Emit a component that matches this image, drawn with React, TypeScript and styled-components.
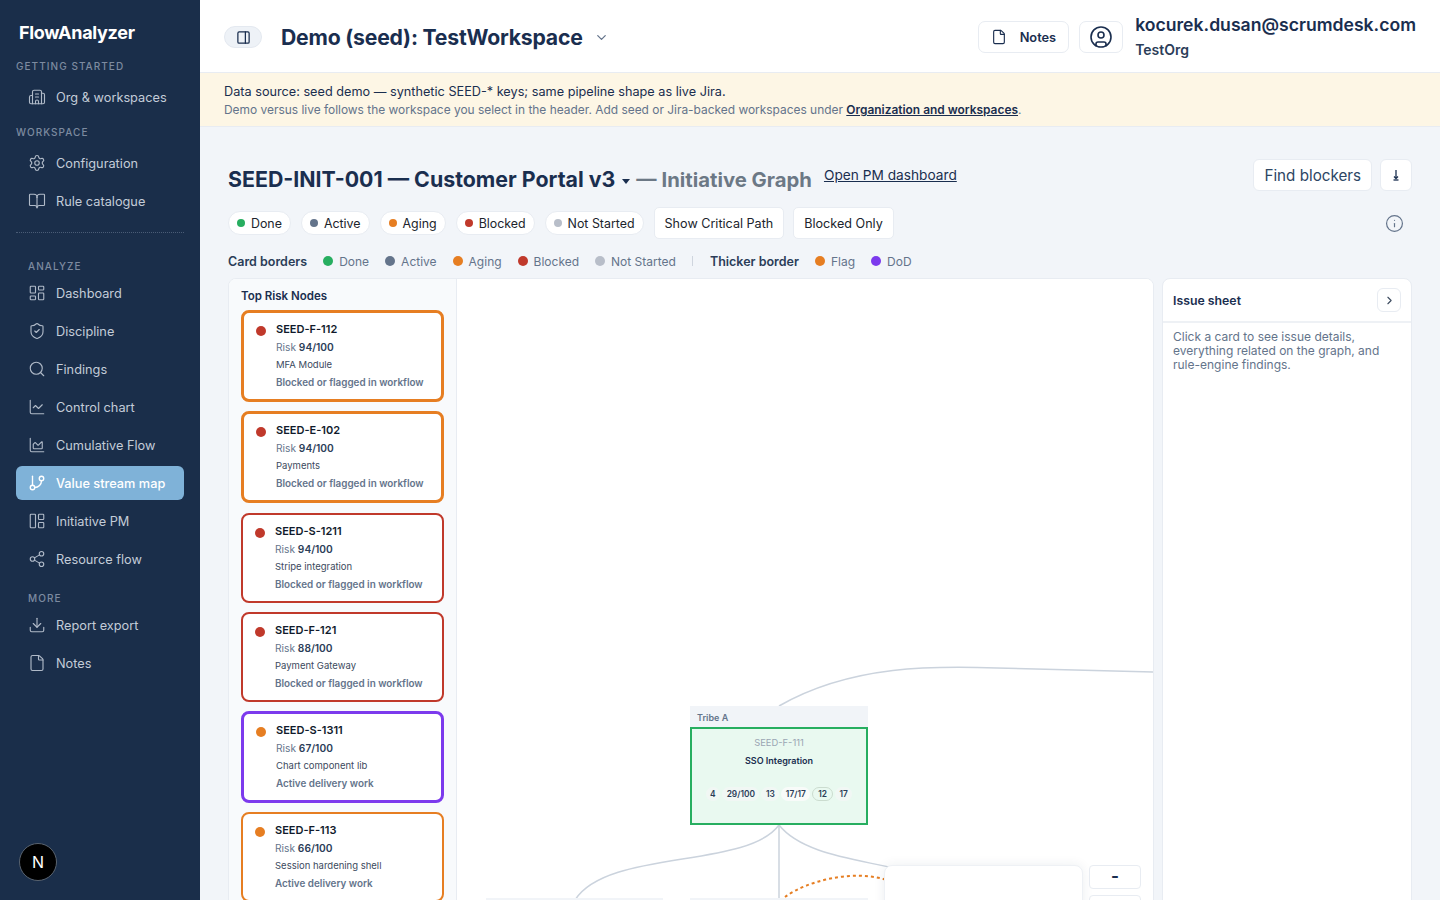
import React from 'react';
import styled, { createGlobalStyle } from 'styled-components';
import {
  BookOpen,
  Building2,
  ChartArea,
  ChartLine,
  ChevronDown,
  ChevronRight,
  CircleUser,
  Download,
  File,
  GitBranch,
  Info,
  LayoutPanelLeft,
  PanelRight,
  Search,
  Settings,
  Share2,
  ShieldCheck,
  LayoutDashboard,
} from 'lucide-react';

const colors = {
  done: '#27ae60',
  active: '#64748b',
  aging: '#e67e22',
  blocked: '#c0392b',
  idle: '#b8bec9',
  dod: '#7c3aed',
  ink: '#1a2e4f',
};

const GlobalStyle = createGlobalStyle`
  html, body {
    margin: 0;
    height: 100%;
    overflow: hidden;
    font-family: Inter, "Liberation Sans", sans-serif;
    color: ${colors.ink};
    background: #f2f5f9;
  }
  * { box-sizing: border-box; }
`;

const Shell = styled.div`
  display: flex;
  width: 1440px;
  height: 900px;
  overflow: hidden;
`;

const Sidebar = styled.aside`
  position: relative;
  flex: 0 0 200px;
  padding: 21px 16px 0;
  background: #1a2e4a;
`;

const Logo = styled.div`
  height: 24px;
  margin: 0 0 14px 3px;
  font-size: 18px;
  line-height: 24px;
  font-weight: 700;
  letter-spacing: -0.3px;
  color: #fff;
`;

const SectionLabel = styled.div<{ $indent?: boolean; $gap: number; $top?: number }>`
  height: 14px;
  margin: ${p => p.$top ?? 15}px 0 ${p => p.$gap}px ${p => (p.$indent ? 12 : 0)}px;
  font-size: 10px;
  line-height: 14px;
  font-weight: 500;
  letter-spacing: 1.05px;
  text-transform: uppercase;
  color: #7d8ba0;
`;

const NavItem = styled.a<{ $active?: boolean }>`
  display: flex;
  align-items: center;
  gap: 10px;
  height: 34px;
  margin-bottom: 4px;
  padding-left: 12px;
  border-radius: 6px;
  font-size: 12.75px;
  font-weight: ${p => (p.$active ? 500 : 400)};
  color: ${p => (p.$active ? '#fff' : '#c3ccd8')};
  background: ${p => (p.$active ? '#7fb2d8' : 'transparent')};

  svg {
    flex: none;
    width: 18px;
    height: 18px;
    stroke-width: ${p => (p.$active ? 1.8 : 1.5)};
    color: ${p => (p.$active ? '#fff' : '#b0bac8')};
  }
`;

const Divider = styled.div`
  margin: 14px 0 26px;
  border-top: 1px dotted #4a5c76;
`;

const NextBadge = styled.div`
  position: absolute;
  left: 19px;
  top: 843px;
  display: flex;
  align-items: center;
  justify-content: center;
  width: 38px;
  height: 38px;
  border-radius: 50%;
  border: 1px solid #59636f;
  background: #000;
  color: #fff;
  font-size: 16px;
  font-weight: 400;
`;

const Main = styled.main`
  flex: 1;
  min-width: 0;
  display: flex;
  flex-direction: column;
`;

const Header = styled.header`
  display: flex;
  align-items: center;
  flex: 0 0 73px;
  padding: 2px 24px 0;
  background: #fff;
  border-bottom: 1px solid #e8ecf2;
`;

const SidebarToggle = styled.button`
  display: flex;
  align-items: center;
  justify-content: center;
  width: 38px;
  height: 22px;
  margin-right: 19px;
  padding: 0;
  border: 1px solid #e4e9f0;
  border-radius: 11px;
  background: #eef2f7;
  color: ${colors.ink};

  svg { width: 15px; height: 15px; }
`;

const WorkspaceName = styled.div`
  font-size: 21.2px;
  font-weight: 700;
  letter-spacing: -0.2px;
  color: ${colors.ink};
`;

const WorkspaceCaret = styled(ChevronDown)`
  width: 15px;
  height: 15px;
  margin-left: 11px;
  color: #64748b;
`;

const HeaderRight = styled.div`
  display: flex;
  align-items: center;
  margin-left: auto;
`;

const HeaderButton = styled.button`
  display: flex;
  align-items: center;
  justify-content: center;
  gap: 13px;
  height: 32px;
  padding: 0 12px;
  margin-right: 10px;
  border: 1px solid #e8ecf2;
  border-radius: 7px;
  background: #fff;
  color: ${colors.ink};
  font: 600 12.8px Inter, "Liberation Sans", sans-serif;

  svg { width: 16px; height: 16px; stroke-width: 1.7; }
`;

const UserButton = styled(HeaderButton)`
  width: 44px;
  padding: 0;
  margin-right: 12px;

  svg { width: 24px; height: 24px; stroke-width: 1.6; }
`;

const UserBlock = styled.div`
  display: flex;
  flex-direction: column;
  gap: 4px;
  margin-top: -2px;
`;

const UserEmail = styled.div`
  font-size: 17.6px;
  line-height: 24px;
  font-weight: 600;
`;

const UserOrg = styled.div`
  font-size: 14px;
  line-height: 18px;
  font-weight: 600;
  color: #2b3d58;
`;

const Banner = styled.div`
  flex: 0 0 54px;
  padding: 10px 24px 0;
  background: #fdf6e5;
  border-bottom: 1px solid #e8ecf2;
`;

const BannerLead = styled.div`
  font-size: 12.7px;
  line-height: 18px;
  color: ${colors.ink};
`;

const BannerSub = styled.div`
  font-size: 11.93px;
  line-height: 18px;
  color: #64748b;

  a {
    font-weight: 600;
    color: ${colors.ink};
    text-decoration: underline;
  }
`;

const Content = styled.div`
  flex: 1;
  min-height: 0;
  padding: 32px 28px 0;
`;

const TitleRow = styled.div`
  display: flex;
  align-items: flex-start;
  height: 48px;
`;

const PageTitle = styled.h1`
  display: flex;
  align-items: center;
  height: 32px;
  margin: 4px 0 0;
  font-size: 21.35px;
  font-weight: 700;
  white-space: nowrap;
  color: ${colors.ink};
`;

const TitleCaret = styled.span`
  width: 0;
  height: 0;
  margin: 4px 6px 0 7px;
  border-left: 4.5px solid transparent;
  border-right: 4.5px solid transparent;
  border-top: 5px solid ${colors.ink};
`;

const TitleMuted = styled.span`
  font-size: 20.3px;
  font-weight: 700;
  color: #6c7885;
`;

const PmLink = styled.a`
  margin: 6px 0 0 12px;
  font-size: 13.7px;
  line-height: 20px;
  color: ${colors.ink};
  text-decoration: underline;
`;

const TitleActions = styled.div`
  display: flex;
  gap: 8px;
  margin-left: auto;
`;

const GhostButton = styled.button`
  display: flex;
  align-items: center;
  justify-content: center;
  height: 32px;
  min-width: 32px;
  padding: 0 10px;
  border: 1px solid #e8ecf2;
  border-radius: 6px;
  background: #fff;
  color: #2d4664;
  font: 400 15.2px Inter, "Liberation Sans", sans-serif;
`;

const FilterRow = styled.div`
  display: flex;
  align-items: center;
  height: 32px;
`;

const Pill = styled.button`
  display: flex;
  align-items: center;
  gap: 6px;
  height: 24px;
  margin-right: 10px;
  padding: 0 8px;
  border: 1px solid #e8ecf2;
  border-radius: 12px;
  background: #fff;
  color: #20242c;
  font: 400 12.4px Inter, "Liberation Sans", sans-serif;
`;

const Dot = styled.i<{ $color: string; $size: number }>`
  flex: none;
  display: block;
  width: ${p => p.$size}px;
  height: ${p => p.$size}px;
  border-radius: 50%;
  background: ${p => p.$color};
`;

const ToggleButton = styled.button`
  height: 32px;
  margin-right: 9px;
  padding: 0 10px;
  border: 1px solid #e8ecf2;
  border-radius: 5px;
  background: #fff;
  color: #20242c;
  font: 400 12.6px Inter, "Liberation Sans", sans-serif;
`;

const InfoIcon = styled(Info)`
  width: 19px;
  height: 19px;
  margin: 0 8px 0 auto;
  stroke-width: 1.5;
  color: #64748b;
`;

const LegendRow = styled.div`
  display: flex;
  align-items: center;
  height: 39px;
  padding-top: 5px;
  font-size: 12px;
  color: #64748b;
`;

const LegendTitle = styled.b`
  margin-right: 16px;
  font-size: 12.5px;
  font-weight: 600;
  color: #2b3d58;
`;

const LegendItem = styled.span`
  display: flex;
  align-items: center;
  gap: 6px;
  margin-right: 16px;
`;

const LegendBar = styled.span`
  width: 1px;
  height: 10px;
  margin: 0 17px 0 0;
  background: #cfd5de;
`;

const Workbench = styled.div`
  display: flex;
  gap: 8px;
  height: 640px;
`;

const GraphPanel = styled.section`
  display: flex;
  flex: 0 0 926px;
  border: 1px solid #e8ecf2;
  border-radius: 8px;
  background: #fff;
  overflow: hidden;
`;

const RiskColumn = styled.div`
  flex: 0 0 228px;
  padding: 9px 12px 0;
  background: #f8fafc;
  border-right: 1px solid #e8ecf2;
`;

const RiskHeading = styled.div`
  height: 22px;
  font-size: 11.5px;
  line-height: 17px;
  font-weight: 600;
  color: ${colors.ink};
`;

const RiskCard = styled.div<{ $border: string; $thick?: boolean; $after: number }>`
  display: flex;
  align-items: flex-start;
  gap: 10px;
  height: ${p => (p.$thick ? 92 : 90)}px;
  margin-bottom: ${p => p.$after}px;
  padding: 8px 12px;
  border: ${p => (p.$thick ? 3 : 2)}px solid ${p => p.$border};
  border-radius: 8px;
  background: #fff;
`;

const RiskDot = styled(Dot)`
  margin-top: 5px;
`;

const RiskBody = styled.div`
  min-width: 0;
  font-size: 9.5px;
  line-height: 17.5px;
  color: #3c4a5e;
  white-space: nowrap;
`;

const RiskKey = styled.div`
  font-size: 11px;
  font-weight: 600;
  color: #101a2b;
`;

const RiskScore = styled.div`
  font-size: 10.2px;
  color: #64748b;

  b {
    font-weight: 600;
    color: #2b3d58;
  }
`;

const RiskReason = styled.div`
  font-size: 9.9px;
  font-weight: 600;
  color: #64748b;
`;

const Canvas = styled.div`
  position: relative;
  flex: 1;
  overflow: hidden;
  background: #fff;
`;

const Edges = styled.svg`
  position: absolute;
  left: 0;
  top: 0;
  width: 696px;
  height: 621px;
`;

const TribeBar = styled.div<{ $x: number; $y: number; $w: number }>`
  position: absolute;
  left: ${p => p.$x}px;
  top: ${p => p.$y}px;
  width: ${p => p.$w}px;
  height: 21px;
  padding: 6px 7px 0;
  background: #f1f4f8;
  font-size: 9px;
  line-height: 12px;
  font-weight: 600;
  color: #64748b;
`;

const GraphNode = styled.div`
  position: absolute;
  left: 233px;
  top: 448px;
  display: flex;
  flex-direction: column;
  align-items: center;
  width: 178px;
  height: 98px;
  padding-top: 8px;
  border: 2px solid ${colors.done};
  background: #e9f9f0;
`;

const NodeKey = styled.div`
  font-size: 9.4px;
  line-height: 12px;
  color: #9aa5b3;
`;

const NodeName = styled.div`
  margin-top: 6px;
  font-size: 9px;
  line-height: 12px;
  font-weight: 600;
  color: #1a2e4f;
`;

const NodeStats = styled.div`
  display: flex;
  align-items: center;
  gap: 2px;
  margin-top: 20px;
`;

const NodeStat = styled.span<{ $ring?: boolean; $light?: boolean }>`
  padding: 0 ${p => (p.$ring ? 5 : 3.5)}px;
  height: 14px;
  border: 1px solid ${p => (p.$ring ? '#cbdccf' : 'transparent')};
  border-radius: 7px;
  background: ${p => (p.$light ? '#f8fbf9' : p.$ring ? 'transparent' : '#f1f7f4')};
  font-size: 8.4px;
  line-height: 12px;
  font-weight: 600;
  color: #2b3d58;
`;

const MiniMap = styled.div`
  position: absolute;
  left: 427px;
  top: 586px;
  width: 199px;
  height: 60px;
  border: 1px solid #eef1f5;
  border-radius: 8px;
  background: #fff;
  box-shadow: 0 0 12px rgba(26, 46, 79, 0.08);
`;

const ZoomButton = styled.button<{ $y: number }>`
  position: absolute;
  left: 632px;
  top: ${p => p.$y}px;
  width: 52px;
  height: 24px;
  padding: 0 0 2px;
  border: 1px solid #e8ecf2;
  border-radius: 4px;
  background: #fff;
  color: #1a2e4f;
  font: 700 17px Inter, "Liberation Sans", sans-serif;
`;

const IssueSheet = styled.aside`
  flex: 0 0 250px;
  border: 1px solid #e8ecf2;
  border-radius: 8px;
  background: #fff;
`;

const SheetHeader = styled.div`
  display: flex;
  align-items: center;
  justify-content: space-between;
  height: 44px;
  padding: 0 10px;
  border-bottom: 2px solid #eef1f5;
`;

const SheetTitle = styled.div`
  font-size: 12.3px;
  font-weight: 600;
  color: ${colors.ink};
`;

const SheetClose = styled.button`
  display: flex;
  align-items: center;
  justify-content: center;
  width: 24px;
  height: 24px;
  padding: 0;
  border: 1px solid #e8ecf2;
  border-radius: 6px;
  background: #fff;
  color: #3c4a5e;

  svg { width: 13px; height: 13px; }
`;

const SheetHint = styled.p`
  margin: 0;
  padding: 7px 10px;
  font-size: 12px;
  line-height: 14px;
  color: #64748b;
`;

// the arrow in the export button: short stem, tiny head, tiny base
const ExportArrow = () => (
  <svg width="8" height="12" viewBox="0 0 8 12" fill="none" stroke={colors.ink} strokeWidth="1.3">
    <path d="M4 1v8" />
    <path d="M2 7.5 4 9.5 6 7.5" />
    <path d="M1.5 11h5" />
  </svg>
);

const navTop = [
  { label: 'Dashboard', icon: LayoutDashboard },
  { label: 'Discipline', icon: ShieldCheck },
  { label: 'Findings', icon: Search },
  { label: 'Control chart', icon: ChartLine },
  { label: 'Cumulative Flow', icon: ChartArea },
  { label: 'Value stream map', icon: GitBranch, active: true },
  { label: 'Initiative PM', icon: LayoutPanelLeft },
  { label: 'Resource flow', icon: Share2 },
];

const pills = [
  { label: 'Done', color: colors.done },
  { label: 'Active', color: colors.active },
  { label: 'Aging', color: colors.aging },
  { label: 'Blocked', color: colors.blocked },
  { label: 'Not Started', color: colors.idle },
];

const BLOCKED_REASON = 'Blocked or flagged in workflow';
const ACTIVE_REASON = 'Active delivery work';

const riskCards = [
  { id: 'SEED-F-112', score: '94/100', name: 'MFA Module', reason: BLOCKED_REASON, border: colors.aging, dot: colors.blocked, thick: true, after: 9 },
  { id: 'SEED-E-102', score: '94/100', name: 'Payments', reason: BLOCKED_REASON, border: colors.aging, dot: colors.blocked, thick: true, after: 10 },
  { id: 'SEED-S-1211', score: '94/100', name: 'Stripe integration', reason: BLOCKED_REASON, border: colors.blocked, dot: colors.blocked, after: 9 },
  { id: 'SEED-F-121', score: '88/100', name: 'Payment Gateway', reason: BLOCKED_REASON, border: colors.blocked, dot: colors.blocked, after: 9 },
  { id: 'SEED-S-1311', score: '67/100', name: 'Chart component lib', reason: ACTIVE_REASON, border: colors.dod, dot: colors.aging, thick: true, after: 9 },
  { id: 'SEED-F-113', score: '66/100', name: 'Session hardening shell', reason: ACTIVE_REASON, border: colors.aging, dot: colors.aging, after: 9 },
];

const App: React.FC = () => (
  <Shell>
    <GlobalStyle />
    <Sidebar>
      <Logo>FlowAnalyzer</Logo>
      <SectionLabel $gap={7} $top={0}>Getting started</SectionLabel>
      <NavItem><Building2 />Org &amp; workspaces</NavItem>
      <SectionLabel $gap={7} $top={11}>Workspace</SectionLabel>
      <NavItem><Settings />Configuration</NavItem>
      <NavItem><BookOpen />Rule catalogue</NavItem>
      <Divider />
      <SectionLabel $indent $gap={3} $top={0}>Analyze</SectionLabel>
      {navTop.map(item => (
        <NavItem key={item.label} $active={item.active}>
          <item.icon />
          {item.label}
        </NavItem>
      ))}
      <SectionLabel $indent $gap={3}>More</SectionLabel>
      <NavItem><Download />Report export</NavItem>
      <NavItem><File />Notes</NavItem>
      <NextBadge>N</NextBadge>
    </Sidebar>

    <Main>
      <Header>
        <SidebarToggle><PanelRight /></SidebarToggle>
        <WorkspaceName>Demo (seed): TestWorkspace</WorkspaceName>
        <WorkspaceCaret />
        <HeaderRight>
          <HeaderButton><File />Notes</HeaderButton>
          <UserButton><CircleUser /></UserButton>
          <UserBlock>
            <UserEmail>kocurek.dusan@scrumdesk.com</UserEmail>
            <UserOrg>TestOrg</UserOrg>
          </UserBlock>
        </HeaderRight>
      </Header>

      <Banner>
        <BannerLead>Data source: seed demo — synthetic SEED-* keys; same pipeline shape as live Jira.</BannerLead>
        <BannerSub>
          Demo versus live follows the workspace you select in the header. Add seed or Jira-backed workspaces under{' '}
          <a>Organization and workspaces</a>.
        </BannerSub>
      </Banner>

      <Content>
        <TitleRow>
          <PageTitle>
            SEED-INIT-001 — Customer Portal v3
            <TitleCaret />
            <TitleMuted>— Initiative Graph</TitleMuted>
          </PageTitle>
          <PmLink>Open PM dashboard</PmLink>
          <TitleActions>
            <GhostButton>Find blockers</GhostButton>
            <GhostButton><ExportArrow /></GhostButton>
          </TitleActions>
        </TitleRow>

        <FilterRow>
          {pills.map(pill => (
            <Pill key={pill.label}>
              <Dot $color={pill.color} $size={8} />
              {pill.label}
            </Pill>
          ))}
          <ToggleButton>Show Critical Path</ToggleButton>
          <ToggleButton>Blocked Only</ToggleButton>
          <InfoIcon />
        </FilterRow>

        <LegendRow>
          <LegendTitle>Card borders</LegendTitle>
          {pills.map(pill => (
            <LegendItem key={pill.label}>
              <Dot $color={pill.color} $size={10} />
              {pill.label}
            </LegendItem>
          ))}
          <LegendBar />
          <LegendTitle>Thicker border</LegendTitle>
          <LegendItem><Dot $color={colors.aging} $size={10} />Flag</LegendItem>
          <LegendItem><Dot $color={colors.dod} $size={10} />DoD</LegendItem>
        </LegendRow>

        <Workbench>
          <GraphPanel>
            <RiskColumn>
              <RiskHeading>Top Risk Nodes</RiskHeading>
              {riskCards.map(card => (
                <RiskCard key={card.id} $border={card.border} $thick={card.thick} $after={card.after}>
                  <RiskDot $color={card.dot} $size={10} />
                  <RiskBody>
                    <RiskKey>{card.id}</RiskKey>
                    <RiskScore>Risk <b>{card.score}</b></RiskScore>
                    <div>{card.name}</div>
                    <RiskReason>{card.reason}</RiskReason>
                  </RiskBody>
                </RiskCard>
              ))}
            </RiskColumn>

            <Canvas>
              <Edges viewBox="0 0 696 621" fill="none">
                <path d="M322 427 C 395 385, 480 387, 540 389 C 600 391, 650 392, 696 393" stroke="#cbd3dd" strokeWidth="1.5" />
                <path d="M322 546 C 290 590, 150 570, 118 621" stroke="#cbd3dd" strokeWidth="1.5" />
                <path d="M322 546 L322 621" stroke="#cbd3dd" strokeWidth="1.5" />
                <path d="M322 546 C 345 575, 400 580, 440 590" stroke="#cbd3dd" strokeWidth="1.5" />
                <path d="M328 618 C 350 602, 395 590, 430 601" stroke="#e67e22" strokeWidth="2" strokeDasharray="3 3" />
              </Edges>
              <TribeBar $x={233} $y={427} $w={178}>Tribe A</TribeBar>
              <GraphNode>
                <NodeKey>SEED-F-111</NodeKey>
                <NodeName>SSO Integration</NodeName>
                <NodeStats>
                  <NodeStat>4</NodeStat>
                  <NodeStat>29/100</NodeStat>
                  <NodeStat>13</NodeStat>
                  <NodeStat $light>17/17</NodeStat>
                  <NodeStat $ring>12</NodeStat>
                  <NodeStat>17</NodeStat>
                </NodeStats>
              </GraphNode>
              <TribeBar $x={29} $y={619} $w={177} />
              <TribeBar $x={233} $y={619} $w={178} />
              <MiniMap />
              <ZoomButton $y={586}>-</ZoomButton>
              <ZoomButton $y={616} aria-label="Zoom in" />
            </Canvas>
          </GraphPanel>

          <IssueSheet>
            <SheetHeader>
              <SheetTitle>Issue sheet</SheetTitle>
              <SheetClose><ChevronRight /></SheetClose>
            </SheetHeader>
            <SheetHint>
              Click a card to see issue details, everything related on the graph, and rule-engine findings.
            </SheetHint>
          </IssueSheet>
        </Workbench>
      </Content>
    </Main>
  </Shell>
);

export default App;
